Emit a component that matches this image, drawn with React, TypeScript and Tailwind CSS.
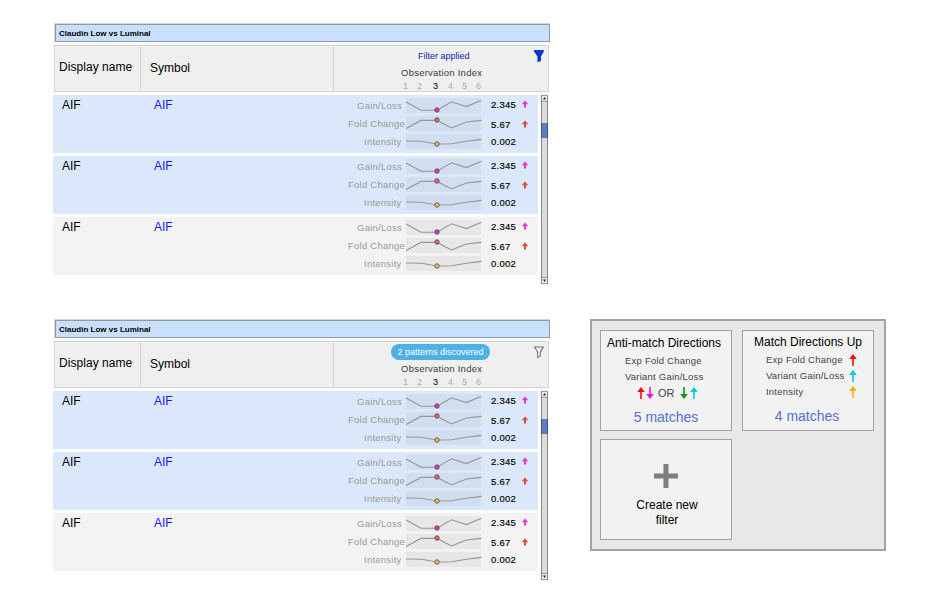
import React from "react";

const metrics = [
  {
    label: "Gain/Loss",
    pad: "pl-[24px]",
    labelTop: "pt-[1px]",
    valueTop: "pt-0",
    value: "2.345",
    points: "0,4 15,12.3 31,12.3 45.5,3.8 60.5,8.6 75.5,2.3",
    cy: 12,
    dot: "#e42fc9",
    arrow: "#e23ad6",
  },
  {
    label: "Fold Change",
    pad: "pl-[15px]",
    labelTop: "pt-[1px]",
    valueTop: "pt-[2px]",
    value: "5.67",
    points: "0,12.5 15,4.4 31,4.4 45.5,12 60.5,6 75.5,4.4",
    cy: 4,
    dot: "#f2606c",
    arrow: "#e2492f",
  },
  {
    label: "Intensity",
    pad: "pl-[31px]",
    labelTop: "pt-[1px]",
    valueTop: "pt-[1px]",
    value: "0.002",
    points: "0,7 15,7.3 31,10 45.5,9.8 60.5,7.2 75.5,5.4",
    cy: 10,
    dot: "#f8c544",
    arrow: "",
  },
];

function Row({ selected }: { selected: boolean }) {
  return (
    <div className={`flex h-[58px] w-[485px] ${selected ? "bg-[#dbe8fc]" : "bg-[#f3f3f3]"}`}>
      <div className="w-[92px] pl-[9px] pt-[2px] text-[12px] leading-[16px]">AIF</div>
      <div className="w-[188px] pl-[9px] pt-[2px] text-[12px] leading-[16px] text-[#1a14ff]">AIF</div>
      <div className="flex flex-col gap-[3px] pt-[3px]">
        {metrics.map((m) => (
          <div key={m.label} className="flex h-[15px] whitespace-nowrap">
            <div className={`w-[73px] text-[9.5px] leading-[14px] tracking-[0.24px] text-[#999] ${m.pad} ${m.labelTop}`}>
              {m.label}
            </div>
            <svg
              width="75"
              height="15"
              className={`shrink-0 overflow-visible ${selected ? "bg-[#d0deef]" : "bg-[#e7e7e7]"}`}
            >
              <polyline points={m.points} fill="none" stroke="#969696" strokeWidth="1.1" />
              <circle cx="31" cy={m.cy} r="2.2" fill={m.dot} stroke="#5c4a50" strokeWidth="0.9" />
            </svg>
            <div className={`w-[41px] pl-[10px] text-[9.5px] leading-[14px] tracking-[0.25px] [-webkit-text-stroke:0.15px_black] ${m.valueTop}`}>
              {m.value}
            </div>
            {m.arrow && (
              <svg width="6" height="15" className="shrink-0 overflow-visible">
                <path d="M3 2.5L6.3 6.3H4V9.5H2V6.3H-.3Z" fill={m.arrow} transform={m.cy === 4 ? "translate(0 2)" : undefined} />
              </svg>
            )}
          </div>
        ))}
      </div>
    </div>
  );
}

function ScrollBar() {
  return (
    <div className="flex h-[189px] w-[7px] flex-col border-x border-[#888] bg-[#dcdcdc]">
      <svg width="5" height="7" className="bg-[#eee]">
        <path d="M0 .5H5M0 6.5H5" stroke="#999" />
        <path d="M2.5 2L4 4.5H1Z" fill="#222" />
      </svg>
      <div className="mt-[21px] h-[15px] -mx-px border-x border-[#38588f] bg-[#5b80bd]" />
      <svg width="5" height="7" className="mt-auto bg-[#eee]">
        <path d="M0 .5H5M0 6.5H5" stroke="#999" />
        <path d="M2.5 5L4 2.5H1Z" fill="#222" />
      </svg>
    </div>
  );
}

function Table({ discovered }: { discovered: boolean }) {
  return (
    <section className="h-[296px] w-[497px] shrink-0">
      <div className="ml-px h-[19px] w-[496px] border-l border-t border-[#d2d2d2]">
        <div className="h-[18px] border border-[#94979c] bg-[#c8e0ff] pl-[3px] text-[8px] font-bold leading-[17px]">
          Claudin Low vs Luminal
        </div>
      </div>
      <div className="ml-px mt-[3px] flex h-[47px] w-[495px] border border-[#d4d4d4] bg-[#efefef]">
        <div className="w-[86px] border-r border-[#d4d4d4] pl-[4px] pt-[13px] text-[12px] leading-[16px] tracking-[0.05px]">
          Display name
        </div>
        <div className="w-[193px] border-r border-[#d4d4d4] pl-[9px] pt-[14px] text-[12px] leading-[16px]">
          Symbol
        </div>
        <div className="flex w-[214px] flex-col items-center whitespace-nowrap">
          <div className="flex h-[20px] w-full shrink-0 pt-[2px]">
            {discovered ? (
              <div className="ml-[57px] h-[16px] w-[99px] rounded-full bg-[#4db0e6] text-center text-[9px] leading-[16px] text-white">
                2 patterns discovered
              </div>
            ) : (
              <div className="ml-[84px] w-[72px] text-[9px] leading-[16px] text-[#1024a8]">Filter applied</div>
            )}
            <svg width="11" height="13" className="ml-[43px] mt-[2px]">
              {discovered ? (
                <path d="M1.5 1H10.3L7.3 6V10.2L4.6 11.4V6Z" fill="#f4f4f4" stroke="#777" strokeWidth="1.1" />
              ) : (
                <path d="M1 0H10.8V1.5L8 6.5V11L4.5 12.2V6.5L1 1.5Z" fill="#0536c8" />
              )}
            </svg>
          </div>
          <div className="w-full shrink-0 pl-[67px] text-[9.5px] leading-[14px] tracking-[0.24px] text-[#3c3c3c]">
            Observation Index
          </div>
          <div className="flex w-full shrink-0 pl-[69px] text-[9px] leading-[12px] text-[#adadad]">
            <span className="w-[14px]">1</span>
            <span className="w-[16px]">2</span>
            <span className="w-[15px] text-black">3</span>
            <span className="w-[14px]">4</span>
            <span className="w-[14px]">5</span>
            <span>6</span>
          </div>
        </div>
      </div>
      <div className="mt-[3px] flex gap-[3px]">
        <div className="flex flex-col gap-[3px]">
          <Row selected />
          <Row selected />
          <Row selected={false} />
        </div>
        <ScrollBar />
      </div>
    </section>
  );
}

function Arrow({ color, down = false }: { color: string; down?: boolean }) {
  return (
    <svg width="8" height="12" viewBox="0 0 8 12" className={`shrink-0 ${down ? "rotate-180" : ""}`}>
      <path d="M4 0L7.8 5H4.8V12H3.2V5H.2Z" fill={color} />
    </svg>
  );
}

const card = "h-[101px] w-[132px] border border-[#a2a2a2] bg-[#f2f2f2] whitespace-nowrap";

function FilterPanel() {
  const up = [
    ["Exp Fold Change", "#fb0d0d"],
    ["Variant Gain/Loss", "#0bcbd8"],
    ["Intensity", "#efb20c"],
  ];
  return (
    <aside className="mt-[296px] grid h-[232px] w-[296px] grid-cols-[132px_132px] content-start gap-x-[10px] gap-y-[8px] border-2 border-[#a4a4a4] bg-[#e8e8e8] pl-[8px] pt-[9px]">
      <div className={card}>
        <div className="pl-[6px] pt-[4px] text-[12px] leading-[16px]">Anti-match Directions</div>
        <div className="pl-[24px] pt-[2px] text-[9.5px] leading-[16px] tracking-[0.22px] text-[#444]">Exp Fold Change</div>
        <div className="pl-[24px] text-[9.5px] leading-[16px] tracking-[0.22px] text-[#444]">Variant Gain/Loss</div>
        <div className="flex h-[16px] items-center pl-[36px] text-[11px] leading-[16px] text-[#444]">
          <Arrow color="#fb0d0d" />
          <span className="ml-px flex"><Arrow color="#f312db" down /></span>
          <span className="ml-[4px] w-[22px]">OR</span>
          <Arrow color="#0a960c" down />
          <span className="ml-[2px] flex"><Arrow color="#0bcbd8" /></span>
        </div>
        <div className="pt-[7px] text-center text-[14px] leading-[18px] text-[#5570d2]">5 matches</div>
      </div>
      <div className={card}>
        <div className="pl-[11px] pt-[3px] text-[12px] leading-[16px]">Match Directions Up</div>
        <div className="pt-[2px]">
          {up.map(([label, color]) => (
            <div key={label} className="flex h-[16px] items-center pl-[23px] text-[9.5px] leading-[16px] tracking-[0.22px] text-[#444]">
              <span className="w-[83px]">{label}</span>
              <Arrow color={color} />
            </div>
          ))}
        </div>
        <div className="pr-[2px] pt-[7px] text-center text-[14px] leading-[18px] text-[#5570d2]">4 matches</div>
      </div>
      <div className={`${card} flex flex-col items-center`}>
        <svg width="24" height="24" className="mt-[24px]">
          <path d="M12 0V24M0 12H24" stroke="#7e7e7e" strokeWidth="5" />
        </svg>
        <div className="mt-[10px] pl-[2px] text-center text-[12px] leading-[15px]">
          Create new
          <br />
          filter
        </div>
      </div>
    </aside>
  );
}

export default function App() {
  return (
    <main className="flex h-[613px] w-[945px] overflow-hidden bg-white pl-[53px] pt-[23px] font-['Liberation_Sans',Arial,sans-serif] text-black">
      <div className="flex flex-col">
        <Table discovered={false} />
        <Table discovered />
      </div>
      <div className="ml-[40px]">
        <FilterPanel />
      </div>
    </main>
  );
}
